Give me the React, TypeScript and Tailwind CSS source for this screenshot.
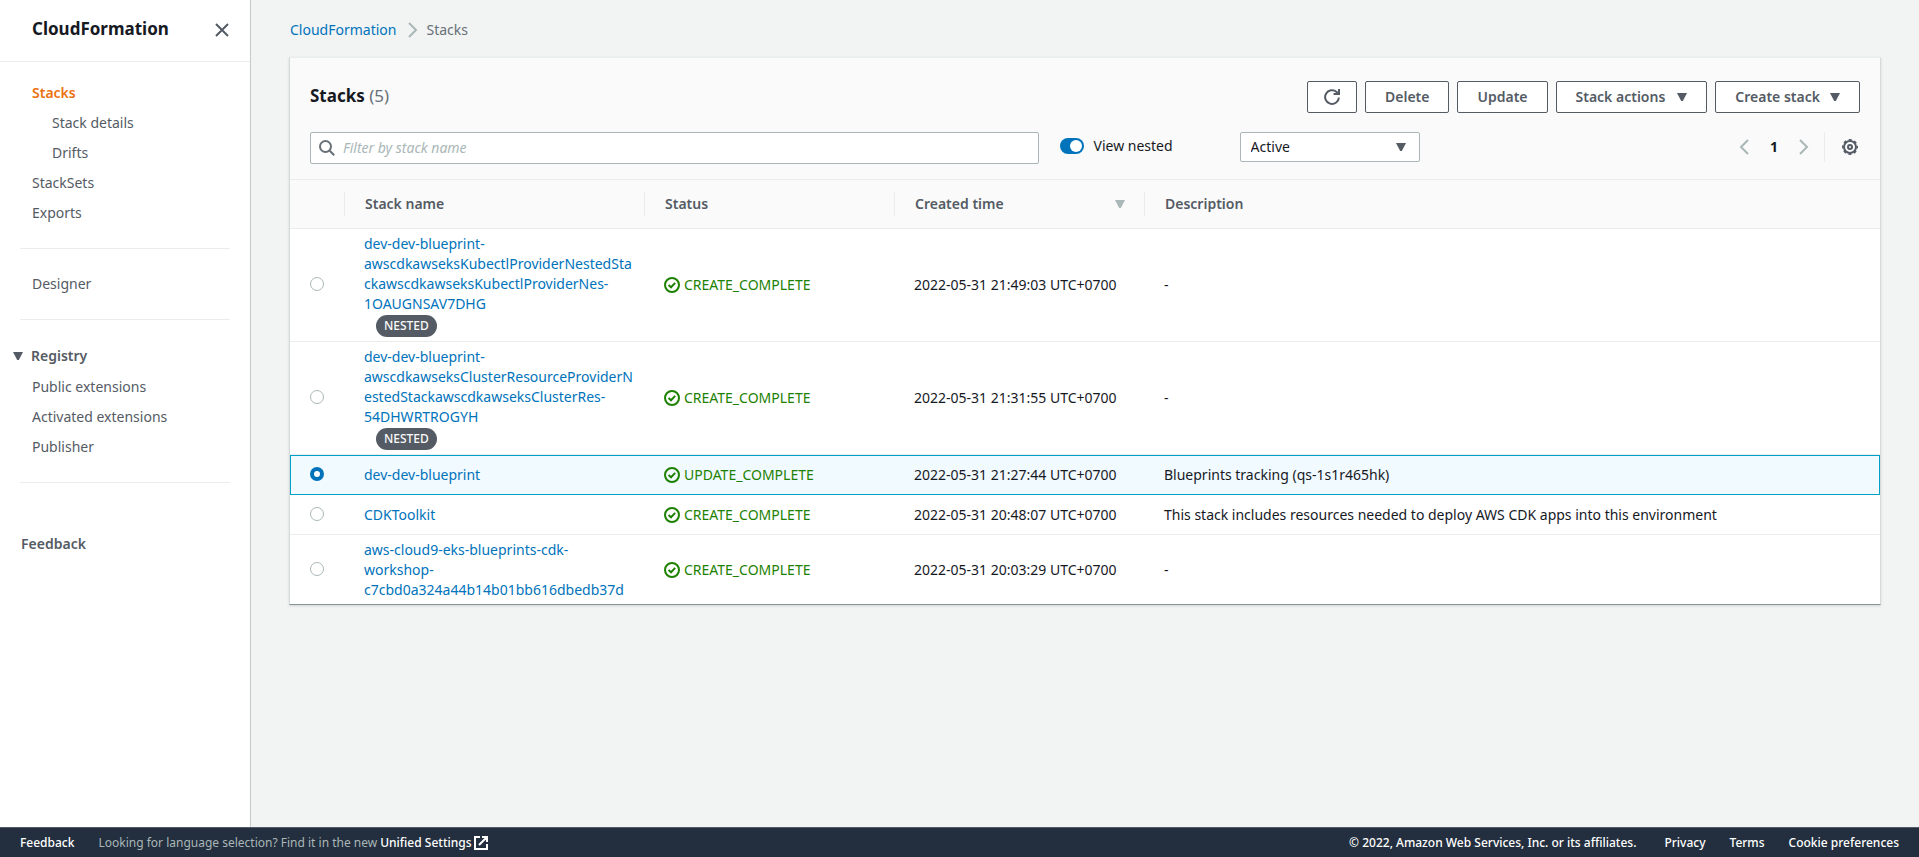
import { useState, type ReactNode } from "react";

type Stack = {
  id: string;
  nameLines: string[];
  nested: boolean;
  status: string;
  created: string;
  description: string;
};

const stacks: Stack[] = [
  {
    id: "kubectl-provider",
    nameLines: [
      "dev-dev-blueprint-",
      "awscdkawseksKubectlProviderNestedSta",
      "ckawscdkawseksKubectlProviderNes-",
      "1OAUGNSAV7DHG",
    ],
    nested: true,
    status: "CREATE_COMPLETE",
    created: "2022-05-31 21:49:03 UTC+0700",
    description: "-",
  },
  {
    id: "cluster-resource-provider",
    nameLines: [
      "dev-dev-blueprint-",
      "awscdkawseksClusterResourceProviderN",
      "estedStackawscdkawseksClusterRes-",
      "54DHWRTROGYH",
    ],
    nested: true,
    status: "CREATE_COMPLETE",
    created: "2022-05-31 21:31:55 UTC+0700",
    description: "-",
  },
  {
    id: "dev-dev-blueprint",
    nameLines: ["dev-dev-blueprint"],
    nested: false,
    status: "UPDATE_COMPLETE",
    created: "2022-05-31 21:27:44 UTC+0700",
    description: "Blueprints tracking (qs-1s1r465hk)",
  },
  {
    id: "cdk-toolkit",
    nameLines: ["CDKToolkit"],
    nested: false,
    status: "CREATE_COMPLETE",
    created: "2022-05-31 20:48:07 UTC+0700",
    description: "This stack includes resources needed to deploy AWS CDK apps into this environment",
  },
  {
    id: "cloud9-workshop",
    nameLines: ["aws-cloud9-eks-blueprints-cdk-", "workshop-", "c7cbd0a324a44b14b01bb616dbedb37d"],
    nested: false,
    status: "CREATE_COMPLETE",
    created: "2022-05-31 20:03:29 UTC+0700",
    description: "-",
  },
];

function Caret({ className = "" }: { className?: string }) {
  return (
    <svg viewBox="0 0 10 8" className={`h-2 w-2.5 shrink-0 ${className}`} fill="currentColor" aria-hidden="true">
      <path d="M0 0h10L5.8 8H4.2z" />
    </svg>
  );
}

function Icon({ children, className = "" }: { children: ReactNode; className?: string }) {
  return (
    <svg
      viewBox="0 0 16 16"
      className={`size-4 shrink-0 ${className}`}
      fill="none"
      stroke="currentColor"
      strokeWidth="2"
      aria-hidden="true"
    >
      {children}
    </svg>
  );
}

function StatusIcon() {
  return (
    <Icon>
      <circle cx="8" cy="8" r="7" />
      <path d="M4.6 8.1 7 10.3l4.2-4.4" />
    </Icon>
  );
}

function GearIcon() {
  return (
    <Icon>
      <circle cx="8" cy="8" r="6" />
      <circle cx="8" cy="8" r="7.3" strokeWidth="1.4" strokeDasharray="3 2.733" strokeDashoffset="1.5" />
      <circle cx="8" cy="8" r="2" />
    </Icon>
  );
}

function ActionButton({ children, label }: { children: ReactNode; label?: string }) {
  return (
    <button
      type="button"
      aria-label={label}
      className="flex h-8 items-center gap-2.5 rounded-xs border border-[#545b64] bg-white px-[19px] font-semibold text-[#545b64]"
    >
      {children}
    </button>
  );
}

function NavLink({ children, className = "" }: { children: ReactNode; className?: string }) {
  return (
    <li className={className}>
      <a href="#" className="block py-1">
        {children}
      </a>
    </li>
  );
}

function Sidebar() {
  return (
    <nav aria-label="CloudFormation" className="flex w-[251px] shrink-0 flex-col border-r border-[#c4cacc] bg-white">
      <div className="flex h-[62px] items-center justify-between border-b border-[#eaeded] pr-[18px] pb-0.5 pl-8">
        <h2 className="text-[17px] font-bold text-[#16191f]">CloudFormation</h2>
        <button type="button" aria-label="Close navigation" className="p-0.5 text-[#545b64]">
          <Icon>
            <path d="m2 2 12 12M14 2 2 14" />
          </Icon>
        </button>
      </div>
      <div className="flex flex-col px-5 pt-[17px]">
        <ul className="flex flex-col gap-0.5 px-3 pb-[21px]">
          <NavLink className="font-semibold text-[#ec7211]">Stacks</NavLink>
          <NavLink className="pl-5">Stack details</NavLink>
          <NavLink className="pl-5">Drifts</NavLink>
          <NavLink>StackSets</NavLink>
          <NavLink>Exports</NavLink>
        </ul>
        <hr className="border-[#eaeded]" />
        <ul className="px-3 py-[21px]">
          <NavLink>Designer</NavLink>
        </ul>
        <hr className="border-[#eaeded]" />
        <button type="button" aria-expanded="true" className="-ml-[7px] mt-[26px] flex items-center gap-2 font-semibold">
          <Caret />
          Registry
        </button>
        <ul className="flex flex-col gap-0.5 px-3 pt-[7px] pb-[21px]">
          <NavLink>Public extensions</NavLink>
          <NavLink>Activated extensions</NavLink>
          <NavLink>Publisher</NavLink>
        </ul>
        <hr className="border-[#eaeded]" />
        <a href="#" className="mt-[51px] pl-px font-semibold">
          Feedback
        </a>
      </div>
    </nav>
  );
}

function Toolbar({ nested, onNested }: { nested: boolean; onNested: (on: boolean) => void }) {
  return (
    <div className="flex flex-col gap-[19px] border-b border-[#eaeded] px-5 pt-[23px] pb-[15px]">
      <div className="flex items-center justify-between">
        <h1 className="pb-0.5 text-[17px] font-bold text-[#16191f]">
          Stacks <span className="font-normal text-[#687078]">(5)</span>
        </h1>
        <div className="flex gap-2">
          <ActionButton label="Refresh">
            <Icon className="-mx-[3px]">
              <path d="M14.9 8.6A6.9 6.9 0 1 1 12.6 2.9l1.4 1.5" />
              <path d="M15 0v5.1H9.6" />
            </Icon>
          </ActionButton>
          <ActionButton>Delete</ActionButton>
          <ActionButton>Update</ActionButton>
          <ActionButton>
            Stack actions
            <Caret className="ml-0.5" />
          </ActionButton>
          <ActionButton>
            Create stack
            <Caret />
          </ActionButton>
        </div>
      </div>
      <div className="flex items-start">
        <label className="flex h-8 w-[47%] items-center gap-2 rounded-xs border border-[#aab7b8] bg-white px-2 text-[#687078]">
          <Icon>
            <circle cx="6.5" cy="6.5" r="5.5" />
            <path d="m10.5 10.5 4.7 4.7" />
          </Icon>
          <input
            type="search"
            aria-label="Filter by stack name"
            placeholder="Filter by stack name"
            className="min-w-0 flex-1 bg-transparent text-[#16191f] outline-none placeholder:text-[#aab7b8] placeholder:italic"
          />
        </label>
        <label className="ml-[21px] flex items-center gap-2.5 pt-1 text-[#16191f]">
          <input
            type="checkbox"
            role="switch"
            checked={nested}
            onChange={(e) => onNested(e.target.checked)}
            className="flex h-4 w-6 appearance-none items-center rounded-full bg-[#687078] px-0.5 before:size-3 before:rounded-full before:bg-white checked:justify-end checked:bg-[#0073bb]"
          />
          View nested
        </label>
        <div className="ml-[67px] grid w-[180px] items-center">
          <select
            aria-label="Stack status filter"
            className="col-start-1 row-start-1 h-[30px] appearance-none rounded-xs border border-[#aab7b8] bg-white px-2.5 text-[#16191f]"
          >
            <option>Active</option>
            <option>Deleted</option>
          </select>
          <Caret className="pointer-events-none col-start-1 row-start-1 mr-3.5 justify-self-end" />
        </div>
        <div className="ml-auto flex h-[30px] items-center text-[#aab7b8]">
          <button type="button" aria-label="Previous page">
            <Icon>
              <path d="M12 1 5 8l7 7" />
            </Icon>
          </button>
          <button type="button" aria-current="page" className="w-11 font-bold text-[#16191f]">
            1
          </button>
          <button type="button" aria-label="Next page">
            <Icon>
              <path d="m4 1 7 7-7 7" />
            </Icon>
          </button>
          <button
            type="button"
            aria-label="Preferences"
            className="ml-3 flex h-full items-center border-l border-[#eaeded] pr-0.5 pl-[17px] text-[#545b64]"
          >
            <GearIcon />
          </button>
        </div>
      </div>
    </div>
  );
}

function HeaderCell({ children, last = false }: { children?: ReactNode; last?: boolean }) {
  return (
    <th scope="col" className="border-b border-[#eaeded] bg-[#fafafa] p-0 py-3 text-left font-semibold">
      <div className={`flex h-6 items-center justify-between border-[#eaeded] pr-[19px] pl-5 ${last ? "" : "border-r"}`}>
        {children}
      </div>
    </th>
  );
}

function StackRow({ stack, selected, onSelect }: { stack: Stack; selected: boolean; onSelect: () => void }) {
  return (
    <tr
      className={`[&:not(:last-child)>td]:border-b ${
        selected
          ? "bg-[#f1faff] outline-1 -outline-offset-1 outline-[#00a1c9] [&>td]:border-transparent"
          : "bg-white [&>td]:border-[#eaeded]"
      }`}
    >
      <td className="pl-5">
        <input
          type="radio"
          name="stack"
          aria-label={stack.nameLines.join("")}
          checked={selected}
          onChange={onSelect}
          className="mb-0.5 block size-3.5 appearance-none rounded-full border border-[#aab7b8] bg-white checked:border-4 checked:border-[#0073bb]"
        />
      </td>
      <td className="h-10 pt-[5px] pb-1 pl-[19px]">
        <a href="#" className="block text-[#0073bb]">
          {stack.nameLines.map((line) => (
            <span key={line} className="block">
              {line}
            </span>
          ))}
        </a>
        {stack.nested && (
          <span className="mt-px ml-3 block w-fit rounded-full bg-[#545b64] px-2 text-xs leading-[22px] font-medium text-[#fafafa]">
            NESTED
          </span>
        )}
      </td>
      <td className="pl-[19px]">
        <span className="flex items-center gap-1 text-[#1d8102]">
          <StatusIcon />
          {stack.status}
        </span>
      </td>
      <td className="pl-[19px] whitespace-nowrap text-[#16191f]">{stack.created}</td>
      <td className="pr-5 pl-[19px] text-[#16191f]">{stack.description}</td>
    </tr>
  );
}

function Footer() {
  return (
    <footer className="flex h-[30px] items-center justify-between border-t border-[#545b64] bg-[#232f3e] px-5 text-xs font-medium text-white">
      <div className="flex items-center gap-6">
        <a href="#">Feedback</a>
        <p className="flex items-center gap-[3px] font-normal text-[#aab7b8]">
          Looking for language selection? Find it in the new
          <a href="#" className="flex items-center gap-0.5 font-medium text-white">
            Unified Settings
            <svg viewBox="0 0 14 14" className="size-3.5" fill="none" stroke="currentColor" strokeWidth="2" aria-hidden="true">
              <path d="M6 1H1v12h12V8M8 1h5v5M13 1 5 9" />
            </svg>
          </a>
        </p>
      </div>
      <div className="flex items-center gap-6">
        <span className="mr-1">© 2022, Amazon Web Services, Inc. or its affiliates.</span>
        <a href="#">Privacy</a>
        <a href="#">Terms</a>
        <a href="#">Cookie preferences</a>
      </div>
    </footer>
  );
}

export default function App() {
  const [selected, setSelected] = useState("dev-dev-blueprint");
  const [nested, setNested] = useState(true);

  return (
    <div className="flex min-h-screen flex-col bg-[#f2f3f3] font-['Noto_Sans',sans-serif] text-sm text-[#545b64]">
      <div className="flex flex-1">
        <Sidebar />
        <main className="min-w-0 flex-1 px-[38px]">
          <nav aria-label="Breadcrumb" className="flex h-[57px] items-center pt-0.5 pl-px">
            <ol className="flex items-center gap-2">
              <li>
                <a href="#" className="text-[#0073bb]">
                  CloudFormation
                </a>
              </li>
              <li className="flex items-center gap-1.5 text-[#687078]">
                <Icon className="text-[#aab7b8]">
                  <path d="m5 1 7 7-7 7" />
                </Icon>
                Stacks
              </li>
            </ol>
          </nav>
          <section className="border border-[#eaeded] border-x-[#d5dbdb] border-b-[#879596] bg-[#fafafa] shadow-sm">
            <Toolbar nested={nested} onNested={setNested} />
            <table className="w-full table-fixed border-separate border-spacing-0">
              <colgroup>
                <col className="w-[55px]" />
                <col className="w-[300px]" />
                <col className="w-[250px]" />
                <col className="w-[250px]" />
                <col />
              </colgroup>
              <thead>
                <tr>
                  <HeaderCell />
                  <HeaderCell>Stack name</HeaderCell>
                  <HeaderCell>Status</HeaderCell>
                  <HeaderCell>
                    Created time
                    <Caret className="text-[#aab7b8]" />
                  </HeaderCell>
                  <HeaderCell last>Description</HeaderCell>
                </tr>
              </thead>
              <tbody>
                {stacks.map((stack) => (
                  <StackRow
                    key={stack.id}
                    stack={stack}
                    selected={selected === stack.id}
                    onSelect={() => setSelected(stack.id)}
                  />
                ))}
              </tbody>
            </table>
          </section>
        </main>
      </div>
      <Footer />
    </div>
  );
}
